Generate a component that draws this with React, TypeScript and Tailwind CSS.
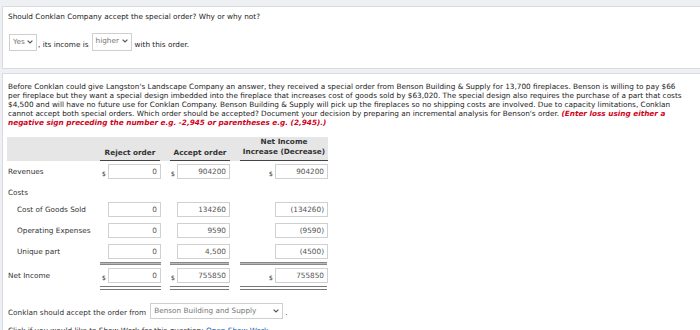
import React from "react"

const font = "font-['DejaVu_Sans','Verdana',sans-serif]"

function Chevron() {
  return (
    <svg width="6" height="4" viewBox="0 0 6 4" className="shrink-0">
      <path d="M0.6 0.6 L3 3 L5.4 0.6" stroke="#555" strokeWidth="1.2" fill="none" />
    </svg>
  )
}

function Select({ value, className }: { value: string; className: string }) {
  return (
    <div
      className={`flex items-start justify-between border border-[#cfcfcf] bg-white pl-[3px] pr-[3px] pt-[2px] text-[#777] ${className}`}
    >
      <span className="leading-[9px]">{value}</span>
      <span className="pt-[3px]">
        <Chevron />
      </span>
    </div>
  )
}

function Cell({
  value,
  dollar,
  width,
  className = "",
}: {
  value: string
  dollar?: boolean
  width: string
  className?: string
}) {
  return (
    <div className={`flex items-end justify-end ${width} ${className}`}>
      {dollar && <span className="mr-[2px] pb-[1px] text-[6.5px] leading-[8px] text-[#444]">$</span>}
      <div className="h-[15px] w-[53px] border border-[#d0d0d0] bg-white pr-[3px] pt-[2px] text-right leading-[9px] text-[#555]">
        {value}
      </div>
    </div>
  )
}

interface Row {
  label: string
  indent?: boolean
  values: [string, string, string]
  dollar?: boolean
  mt: string
}

const rows: Row[] = [
  { label: "Cost of Goods Sold", indent: true, values: ["0", "134260", "(134260)"], mt: "mt-0" },
  { label: "Operating Expenses", indent: true, values: ["0", "9590", "(9590)"], mt: "mt-[6px]" },
  { label: "Unique part", indent: true, values: ["0", "4,500", "(4500)"], mt: "mt-[6px]" },
]

function DataRow({ row }: { row: Row }) {
  return (
    <div className={`flex h-[15px] items-center ${row.mt}`}>
      <div className={`w-[93px] text-[#333] ${row.indent ? "pl-[10px]" : "pl-[1px]"}`}>{row.label}</div>
      <Cell value={row.values[0]} dollar={row.dollar} width="w-[61px]" />
      <Cell value={row.values[1]} dollar={row.dollar} width="w-[60px]" className="ml-[9px]" />
      <Cell value={row.values[2]} dollar={row.dollar} width="w-[88px]" className="ml-[10px]" />
    </div>
  )
}

function Rule({ double }: { double?: boolean }) {
  const cls = double
    ? "h-[4px] border-t-[1.5px] border-b-[1.5px] border-[#777]"
    : "h-[3px] border-t border-b border-[#888] bg-[#bbb]"
  return (
    <div className="flex">
      <div className="w-[93px]" />
      <div className={`w-[61px] ${cls}`} />
      <div className={`ml-[9px] w-[59px] ${cls}`} />
      <div className={`ml-[11px] w-[87px] ${cls}`} />
    </div>
  )
}

export default function App() {
  return (
    <div className={`min-h-[330px] overflow-hidden bg-[#eef0f4] pl-[2px] pt-[6px] text-[7.3px] leading-[9px] text-[#222] ${font}`}>
      {/* Question 1 */}
      <div className="h-[63px] border border-r-0 border-[#d8dce2] bg-white pl-[5px] pt-[5px]">
        <div>Should Conklan Company accept the special order? Why or why not?</div>
        <div className="mt-[12px] flex items-end">
          <Select value="Yes" className="ml-[1px] h-[17px] w-[28px]" />
          <span className="ml-[1px] pb-[2px]">, its income is</span>
          <Select value="higher" className="ml-[3px] h-[18px] w-[40px]" />
          <span className="ml-[3px] pb-[2px]">with this order.</span>
        </div>
      </div>

      {/* Question 2 */}
      <div className="mt-[4px] h-[300px] border border-r-0 border-b-0 border-[#d8dce2] bg-white pt-[8px]">
        <div className="whitespace-nowrap pl-[5px]">
          <div>
            Before Conklan could give Langston's Landscape Company an answer, they received a special order from Benson Building &amp; Supply for 13,700 fireplaces. Benson is willing to pay $66
          </div>
          <div>
            per fireplace but they want a special design imbedded into the fireplace that increases cost of goods sold by $63,020. The special design also requires the purchase of a part that costs
          </div>
          <div>
            $4,500 and will have no future use for Conklan Company. Benson Building &amp; Supply will pick up the fireplaces so no shipping costs are involved. Due to capacity limitations, Conklan
          </div>
          <div>
            cannot accept both special orders. Which order should be accepted? Document your decision by preparing an incremental analysis for Benson's order.{" "}
            <span className="font-bold italic text-[#d0021b]">(Enter loss using either a</span>
          </div>
          <div className="font-bold italic text-[#d0021b]">
            negative sign preceding the number e.g. -2,945 or parentheses e.g. (2,945).)
          </div>
        </div>

        {/* Incremental analysis table */}
        <div className="mt-[10px] w-[325px] pl-[4px]">
          <div className="flex h-[24px] items-end bg-[#e6e6e6] font-bold text-[#333]">
            <div className="w-[93px]" />
            <div className="w-[60px] border-b border-[#444] pb-[3px] text-center">Reject order</div>
            <div className="ml-[10px] w-[60px] border-b border-[#444] pb-[3px] text-center">Accept order</div>
            <div className="ml-[10px] w-[88px] border-b border-[#444] pb-[3px] text-center leading-[10px]">
              Net Income
              <br />
              Increase (Decrease)
            </div>
          </div>

          <DataRow row={{ label: "Revenues", values: ["0", "904200", "904200"], dollar: true, mt: "mt-[3px]" }} />
          <div className="flex h-[23px] items-center pl-[1px] pt-[3px] text-[#333]">Costs</div>
          {rows.map((r) => (
            <DataRow key={r.label} row={r} />
          ))}
          <div className="mt-[3px]">
            <Rule />
          </div>
          <DataRow row={{ label: "Net Income", values: ["0", "755850", "755850"], dollar: true, mt: "mt-[3px]" }} />
          <div className="mt-[3px]">
            <Rule double />
          </div>
        </div>

        <div className="mt-[13px] flex items-end pl-[5px]">
          <span className="pb-[2px] text-[#333]">Conklan should accept the order from</span>
          <Select value="Benson Building and Supply" className="ml-[4px] h-[16px] w-[133px]" />
          <span className="ml-[2px] pb-[2px]">.</span>
        </div>
        <div className="mt-[7px] whitespace-nowrap pl-[5px] text-[#333]">
          Click if you would like to Show Work for this question: <span className="text-[#1a5fb4] underline">Open Show Work</span>
        </div>
      </div>
    </div>
  )
}
